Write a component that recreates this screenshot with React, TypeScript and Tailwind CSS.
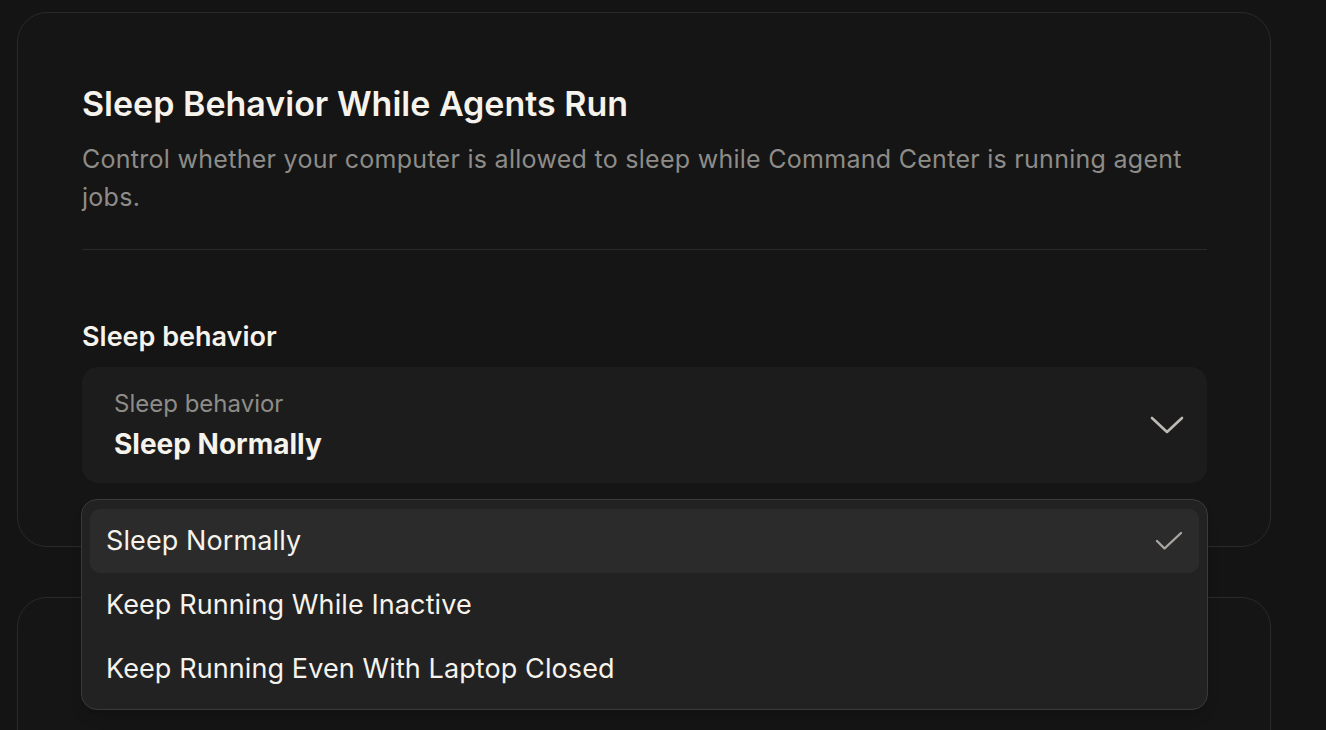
import { useState } from 'react'

const options = [
  'Sleep Normally',
  'Keep Running While Inactive',
  'Keep Running Even With Laptop Closed',
]

function ChevronDown() {
  return (
    <svg width="34" height="20" viewBox="0 0 34 20" fill="none" className="shrink-0">
      <path d="M2 3 L17 17 L32 3" stroke="#bdbab5" strokeWidth="2.6" strokeLinecap="round" strokeLinejoin="round" />
    </svg>
  )
}

function Check() {
  return (
    <svg width="28" height="20" viewBox="0 0 28 20" fill="none" className="shrink-0">
      <path d="M2 10 L9.5 17.5 L26 2" stroke="#a9a6a1" strokeWidth="2.4" strokeLinecap="round" strokeLinejoin="round" />
    </svg>
  )
}

export default function App() {
  const [selected, setSelected] = useState(options[0])
  const [open, setOpen] = useState(true)

  return (
    <div
      className="min-h-screen h-[730px] overflow-hidden bg-[#141414] pl-[17px] pt-[12px]"
      style={{ fontFamily: 'Inter, "Noto Sans", sans-serif' }}
    >
      <div className="flex w-[1254px] flex-col gap-[50px]">
        <section className="rounded-[30px] border border-[#2a2a2a] bg-[#151515] pt-[71px] pb-[63px] pl-[64px] pr-[63px]">
          <h2 className="text-[34px] leading-[40px] font-semibold text-[#f6f2ec]">
            Sleep Behavior While Agents Run
          </h2>
          <p className="mt-[16px] text-[25px] leading-[38px] tracking-[0.28px] text-[#8e8c88]">
            Control whether your computer is allowed to sleep while Command Center is running agent jobs.
          </p>
          <div className="mt-[33px] h-px bg-[#2a2a2a]" />

          <div className="mt-[71px] text-[27px] leading-[32px] font-semibold text-[#f6f2ec]">Sleep behavior</div>

          <div className="relative mt-[14px]">
            <button
              onClick={() => setOpen(!open)}
              className="flex h-[116px] w-full items-center justify-between rounded-[16px] bg-[#1c1c1c] pl-[32px] pr-[23px] text-left"
            >
              <div className="flex flex-col gap-[10px]">
                <span className="text-[24px] leading-[28px] text-[#8e8c88]">Sleep behavior</span>
                <span className="text-[28px] leading-[32px] font-bold text-[#f6f2ec]">{selected}</span>
              </div>
              <ChevronDown />
            </button>

            {open && (
              <div className="absolute left-[-1px] right-[-1px] top-[132px] z-10 rounded-[16px] border border-[#3a3a3a] bg-[#222222] px-[8px] pt-[9px] pb-[8px] shadow-lg">
                {options.map((option) => (
                  <button
                    key={option}
                    onClick={() => {
                      setSelected(option)
                      setOpen(false)
                    }}
                    className={
                      option === selected
                        ? 'flex h-[64px] w-full items-center justify-between rounded-[10px] bg-[#2b2b2b] pl-[16px] pr-[16px] text-left'
                        : 'flex h-[64px] w-full items-center justify-between rounded-[10px] pl-[16px] pr-[16px] text-left'
                    }
                  >
                    <span className="text-[27px] leading-[32px] tracking-[0.1px] text-[#f6f2ec]">{option}</span>
                    {option === selected && <Check />}
                  </button>
                ))}
              </div>
            )}
          </div>
        </section>

        <section className="h-[300px] rounded-[30px] border border-[#2a2a2a] bg-[#151515]" />
      </div>
    </div>
  )
}
